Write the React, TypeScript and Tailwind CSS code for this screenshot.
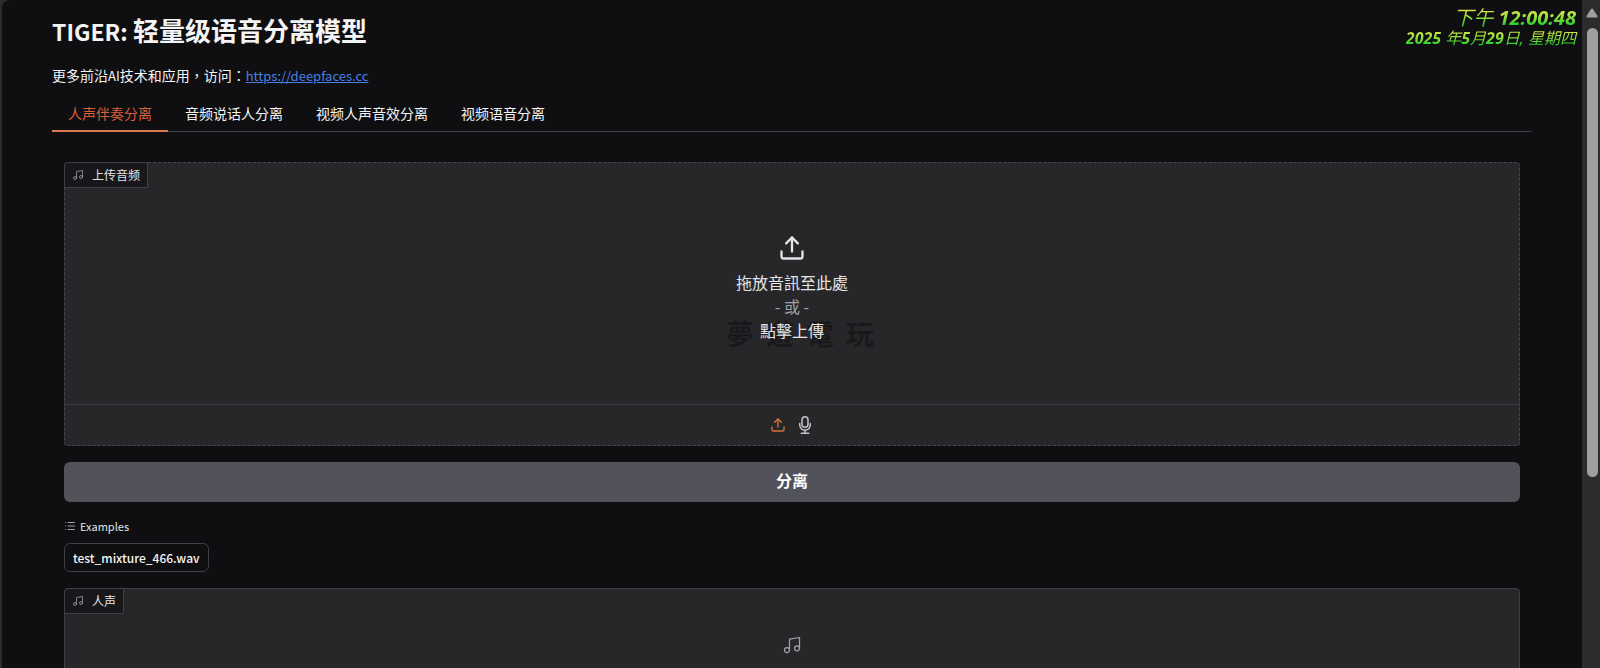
import React, { useState } from 'react';
import { List, Music, Upload } from 'lucide-react';

const TABS = ['人声伴奏分离', '音频说话人分离', '视频人声音效分离', '视频语音分离'];

const MicIcon: React.FC<{ className?: string }> = ({ className }) => (
  <svg
    viewBox="0 0 24 24"
    fill="none"
    stroke="currentColor"
    strokeWidth={2}
    strokeLinecap="round"
    strokeLinejoin="round"
    className={className}
  >
    <rect x="8" y="1" width="8" height="14" rx="4" />
    <path d="M19 10v2a7 7 0 0 1-14 0v-2" />
    <path d="M12 19v4M7 23h10" />
  </svg>
);

const BlockLabel: React.FC<{ children: React.ReactNode }> = ({ children }) => (
  <div className="absolute -top-px -left-px flex h-[26px] items-center gap-2 rounded-tl border border-[#3f3f46] bg-[#18181b] px-[7px] text-xs text-[#e4e4e7]">
    <Music className="size-3 text-[#a1a1aa]" strokeWidth={1.5} />
    {children}
  </div>
);

const Clock: React.FC = () => (
  <div className="absolute top-2 right-1 flex flex-col items-end font-['Noto_Sans','Noto_Sans_CJK_TC',sans-serif] italic">
    <time className="bg-linear-to-b from-[#d9e84a] from-10% to-[#22d32f] to-80% bg-clip-text pr-[2px] text-xl leading-5 text-transparent">
      下午 <span className="font-bold">12:00:48</span>
    </time>
    <time className="bg-linear-to-b from-[#d9e84a] from-10% to-[#22d32f] to-80% bg-clip-text pr-[2px] text-base leading-5 text-transparent">
      <span className="font-bold">2025</span> 年<span className="font-bold">5</span>月
      <span className="font-bold">29</span>日, 星期四
    </time>
  </div>
);

const ScrollTrack: React.FC = () => (
  <div className="flex w-[18px] shrink-0 flex-col items-center bg-[#2c2c2c] pt-2" aria-hidden="true">
    <svg viewBox="0 0 12 10" className="ml-[2px] h-[10px] w-3 shrink-0 text-[#9f9f9f]">
      <path d="M6 0.5Q6.8 0.5 7.3 1.4L11.6 8.2Q12 9.6 10.8 9.6H1.2Q0 9.6 .4 8.2L4.7 1.4Q5.2 .5 6 .5Z" fill="currentColor" />
    </svg>
    <div className="mt-[10px] ml-[2px] h-[68%] w-[11px] rounded-full bg-[#9f9f9f]" />
  </div>
);

const App: React.FC = () => {
  const [activeTab, setActiveTab] = useState(TABS[0]);
  const [source, setSource] = useState<'upload' | 'mic'>('upload');

  return (
    <div className="flex h-screen overflow-hidden bg-[#2c2c2c] pl-[2px] font-['Noto_Sans_CJK_SC',sans-serif] text-[#f4f4f5]">
      <main className="relative min-w-0 flex-1 overflow-hidden rounded-tl-lg bg-[#0f0f11] px-[50px] pt-[14px]">
        <Clock />

        <h1 className="text-[26px] leading-8 font-semibold">
          <span className="text-[23px] leading-8">TIGER: </span>轻量级语音分离模型
        </h1>
        <p className="mt-4 font-['Noto_Sans_CJK_TC',sans-serif] text-sm leading-6">
          更多前沿<span className="text-[13px]">AI</span>技术和应用，访问：
          <a href="https://deepfaces.cc" className="text-[13px] text-[#4a7fe8] underline">https://deepfaces.cc</a>
        </p>

        <div role="tablist" className="mt-2 flex gap-px border-b border-[#3f3f46]">
          {TABS.map((tab) => (
            <button
              key={tab}
              role="tab"
              type="button"
              aria-selected={activeTab === tab}
              onClick={() => setActiveTab(tab)}
              className={`-mb-px h-9 border-b-2 px-4 text-sm ${
                activeTab === tab ? 'border-[#d97b4f] text-[#dc5f3a]' : 'border-transparent text-[#f4f4f5]'
              }`}
            >
              {tab}
            </button>
          ))}
        </div>

        <div className="flex flex-col gap-4 px-3 pt-[30px]">
          <section className="relative rounded border border-dashed border-[#46464c] bg-[#27272a]">
            <BlockLabel>上传音频</BlockLabel>
            <button
              type="button"
              className="relative flex h-[241px] w-full flex-col items-center justify-center text-base leading-6 text-[#e4e4e7]"
            >
              <span
                aria-hidden="true"
                className="absolute top-[150px] left-1/2 ml-2 flex -translate-x-1/2 gap-3 text-[28px] leading-10 font-bold text-[#19191b]"
              >
                <span>夢</span>
                <span>遊</span>
                <span>電</span>
                <span>玩</span>
              </span>
              <Upload className="mt-2 mb-2 size-7" strokeWidth={2} />
              <span className="relative font-['Noto_Sans_CJK_TC',sans-serif]">拖放音訊至此處</span>
              <span className="relative font-['Noto_Sans_CJK_TC',sans-serif] text-[#a1a1aa]">- 或 -</span>
              <span className="relative font-['Noto_Sans_CJK_TC',sans-serif]">點擊上傳</span>
            </button>
            <div className="flex h-[41px] items-center justify-center gap-2.5 border-t border-[#3a3a3e]">
              <button
                type="button"
                aria-label="上傳"
                onClick={() => setSource('upload')}
                className={source === 'upload' ? 'text-[#d9763a]' : 'text-[#c4c4c8]'}
              >
                <Upload className="size-4" strokeWidth={2} />
              </button>
              <button
                type="button"
                aria-label="麥克風"
                onClick={() => setSource('mic')}
                className={source === 'mic' ? 'text-[#d9763a]' : 'text-[#c4c4c8]'}
              >
                <MicIcon className="size-[18px] overflow-visible" />
              </button>
            </div>
          </section>

          <button type="button" className="h-10 rounded-md bg-[#52525b] pb-1 text-base font-semibold text-white">
            分离
          </button>

          <section>
            <h2 className="flex h-4 items-center gap-1 text-[11px] text-[#e4e4e7]">
              <List className="size-3 text-[#a1a1aa]" strokeWidth={2} />
              Examples
            </h2>
            <button
              type="button"
              className="mt-[9px] h-[29px] rounded-md border border-[#3f3f46] px-2 text-xs font-medium text-[#f4f4f5]"
            >
              test_mixture_466.wav
            </button>
          </section>

          <section className="relative flex h-[114px] items-center justify-center rounded border border-[#3f3f46] bg-[#27272a]">
            <BlockLabel>人声</BlockLabel>
            <Music className="size-5 text-[#a1a1aa]" strokeWidth={1.5} />
          </section>
        </div>
      </main>
      <ScrollTrack />
    </div>
  );
};

export default App;
